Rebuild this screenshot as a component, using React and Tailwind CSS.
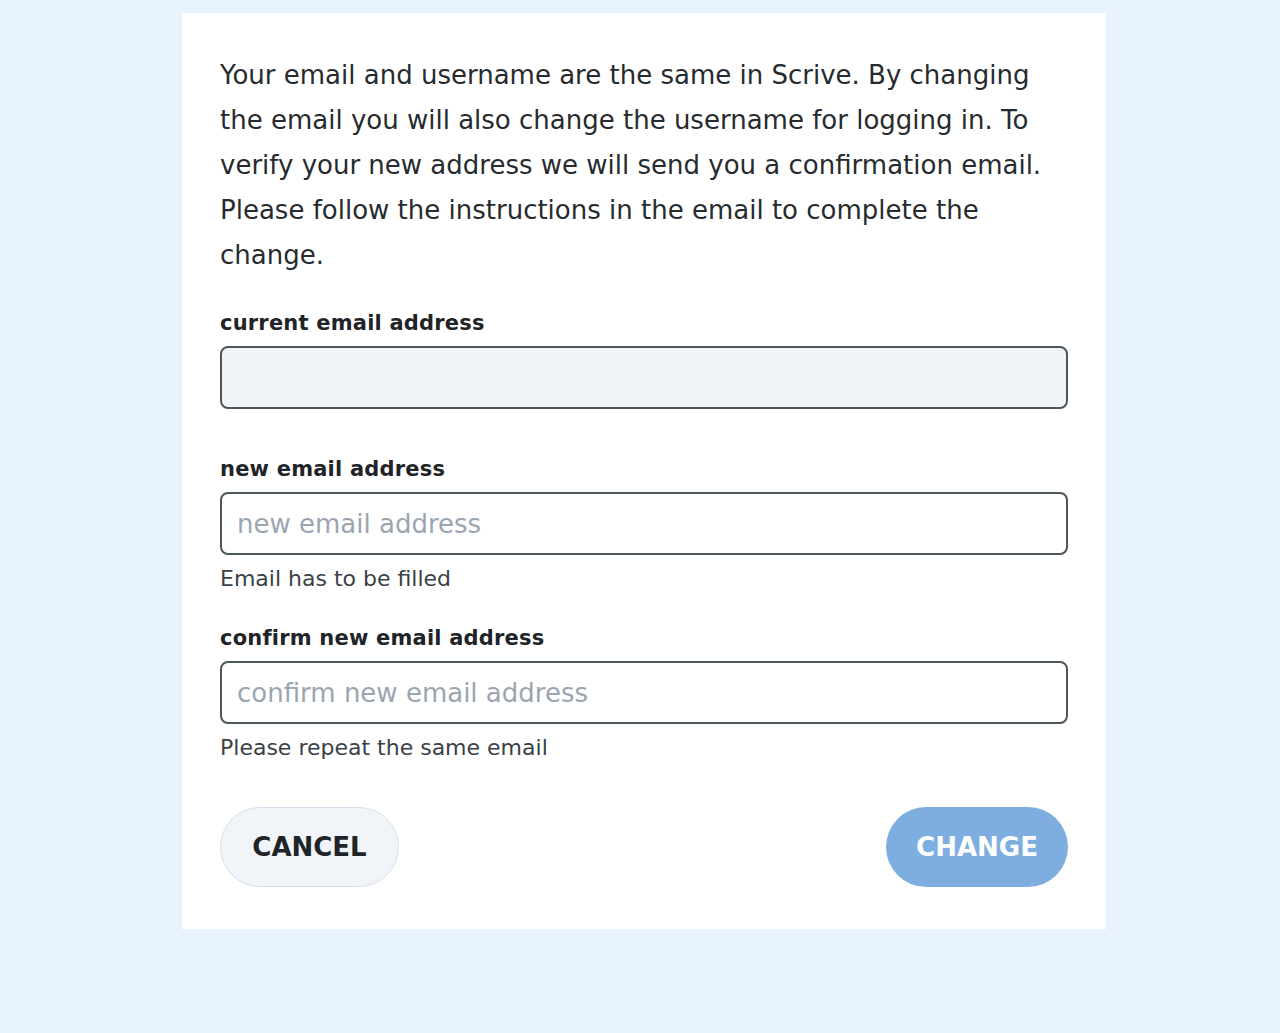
import React from 'react';

// Scrive: change email dialog
const Field = ({ label, placeholder, hint, disabled }) => (
  <div>
    <label className="block text-[21px] leading-[30px] font-bold text-[#1f2428] tracking-[0.2px]">{label}</label>
    <input
      className={`mt-[8px] block w-full h-[63px] rounded-[8px] border-2 border-[#4d5659] px-[15px] text-[26px] text-[#1f2428] placeholder:text-[#9aa5b1] outline-none ${
        disabled ? 'bg-[#f0f4f8]' : 'bg-white'
      }`}
      placeholder={placeholder}
      disabled={disabled}
    />
    {hint && <p className="mt-[11px] text-[22px] leading-[26px] text-[#3a4146]">{hint}</p>}
  </div>
);

export default function App() {
  return (
    <div className="min-h-screen bg-[#e8f2fc] pt-[13px] font-['DejaVu_Sans',sans-serif]" style={{ height: 1033 }}>
      <div className="ml-[182px] w-[924px] bg-white px-[38px] pt-[40px] pb-[42px]">
        <p className="text-[26px] leading-[45px] text-[#262b2f] whitespace-nowrap">
          Your email and username are the same in Scrive. By changing
          <br />
          the email you will also change the username for logging in. To
          <br />
          verify your new address we will send you a confirmation email.
          <br />
          Please follow the instructions in the email to complete the
          <br />
          change.
        </p>

        <div className="mt-[30px]">
          <Field label="current email address" disabled />
        </div>
        <div className="mt-[45px]">
          <Field label="new email address" placeholder="new email address" hint="Email has to be filled" />
        </div>
        <div className="mt-[31px]">
          <Field label="confirm new email address" placeholder="confirm new email address" hint="Please repeat the same email" />
        </div>

        <div className="mt-[46px] flex items-center justify-between">
          <button className="h-[80px] w-[179px] rounded-full border border-[#d5dfeb] bg-[#f1f5f9] text-[26px] font-bold text-[#1f2428]">
            CANCEL
          </button>
          <button className="h-[80px] w-[182px] rounded-full bg-[#7eaee0] text-[26px] font-bold text-white">
            CHANGE
          </button>
        </div>
      </div>
    </div>
  );
}
